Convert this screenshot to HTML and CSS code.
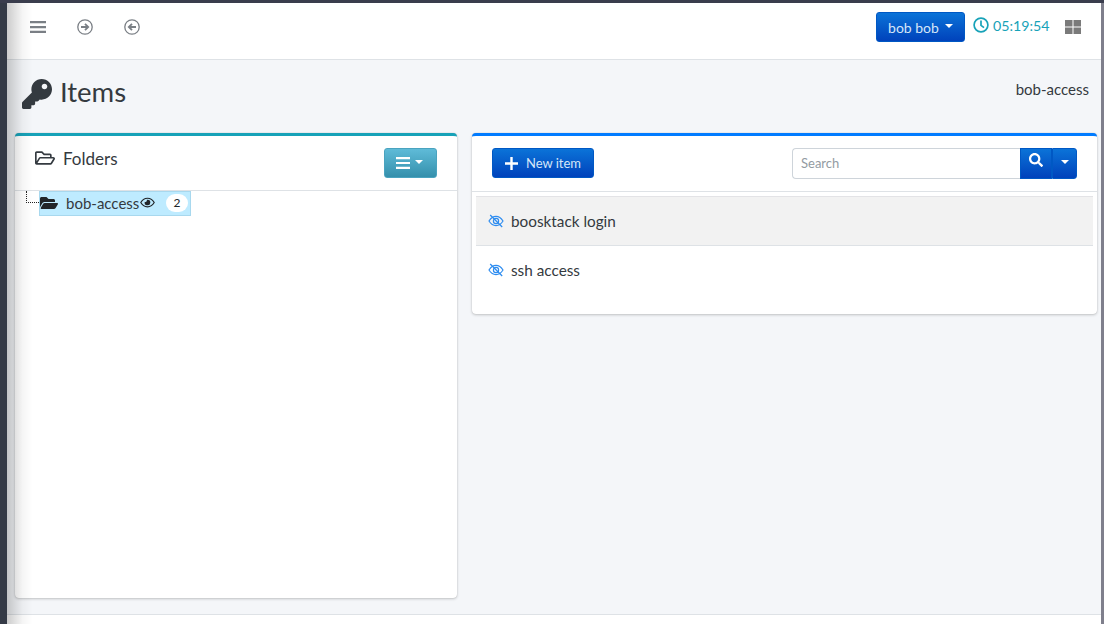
FILE: index.html
```html
<!DOCTYPE html>
<html lang="en">
<head>
    <meta charset="UTF-8">
    <title>Items</title>
    <link rel="stylesheet" href="styles.css">
</head>
<body>
    <div class="sidebar-strip"></div>
    <div class="sidebar-shadow"></div>
    <div class="wrapper">
        <!-- Barre du haut -->
        <nav class="topbar">
            <div class="topbar-left">
                <svg class="nav-icon" viewBox="0 0 16 16"><path d="M0 2h16v2.300H0zM0 6.900h16v2.300H0zM0 11.800h16v2.300H0z"/></svg>
                <svg class="nav-icon" viewBox="0 0 16 16"><circle class="ring" cx="8" cy="8" r="7.200"/><path class="arrow" d="M4 8h7M8 4.800 11.200 8 8 11.200"/></svg>
                <svg class="nav-icon" viewBox="0 0 16 16"><circle class="ring" cx="8" cy="8" r="7.200"/><path class="arrow" d="M12 8H5M8 4.800 4.800 8 8 11.200"/></svg>
            </div>
            <div class="topbar-right">
                <button class="btn btn-blue user-btn">bob bob <span class="caret"></span></button>
                <span class="clock">
                    <svg viewBox="0 0 16 16"><circle cx="8" cy="8" r="6.900"/><path d="M8 3.600V8.400L11 10.600"/></svg>
                    05:19:54
                </span>
                <svg class="apps" viewBox="0 0 16 14"><path d="M0 0h7.500v6.500H0zM8.500 0H16v6.500H8.500zM0 7.500h7.500V14H0zM8.500 7.500H16V14H8.500z"/></svg>
            </div>
        </nav>

        <main class="content">
            <header class="page-head">
                <h1>
                    <svg viewBox="0 0 512 512"><path d="M512 176.001C512 273.203 433.202 352 336 352c-11.220 0-22.190-1.062-32.827-3.069l-24.012 27.014A23.999 23.999 0 0 1 261.223 384H224v40c0 13.255-10.745 24-24 24h-40v40c0 13.255-10.745 24-24 24H24c-13.255 0-24-10.745-24-24v-78.059c0-6.365 2.529-12.470 7.029-16.971l161.802-161.802C163.108 213.814 160 195.271 160 176 160 78.798 238.797.001 335.999 0 433.488-.001 512 78.511 512 176.001zM336 128c0 26.510 21.490 48 48 48s48-21.490 48-48-21.490-48-48-48-48 21.490-48 48z"/></svg>
                    Items
                </h1>
                <span class="crumb">bob-access</span>
            </header>

            <div class="columns">
                <section class="card card-folders">
                    <div class="card-head folders-head">
                        <h2>
                            <svg viewBox="0 0 576 512"><path d="M527.900 224H480v-48c0-26.500-21.500-48-48-48H272l-64-64H48C21.500 64 0 85.500 0 112v288c0 26.500 21.500 48 48 48h400c16.500 0 31.900-8.500 40.700-22.600l79.900-128c20-31.900-3-73.400-40.700-73.400zM48 118c0-3.300 2.700-6 6-6h134.100l64 64H426c3.300 0 6 2.700 6 6v42H152c-16.800 0-32.400 8.800-41.100 23.200L48 351.400zm400 282H72l77.200-128H528z"/></svg>
                            Folders
                        </h2>
                        <button class="btn btn-teal menu-btn">
                            <svg viewBox="0 0 14 12"><path d="M0 0h14v2.200H0zM0 4.900h14v2.200H0zM0 9.800h14V12H0z"/></svg>
                            <span class="caret"></span>
                        </button>
                    </div>
                    <div class="tree">
                        <span class="tree-line"></span>
                        <div class="tree-node">
                            <svg class="node-folder" viewBox="0 0 576 512"><path d="M572.694 292.093L500.270 416.248A63.997 63.997 0 0 1 444.989 448H45.025c-18.523 0-30.064-20.093-20.731-36.093l72.424-124.155A64 64 0 0 1 152 256h399.964c18.523 0 30.064 20.093 20.730 36.093zM152 224h328v-48c0-26.510-21.490-48-48-48H272l-64-64H48C21.490 64 0 85.490 0 112v278.046l69.077-118.418C86.214 242.250 117.989 224 152 224z"/></svg>
                            <span class="node-label">bob-access</span>
                            <svg class="node-eye" viewBox="0 0 576 512"><path d="M288 144a110.940 110.940 0 0 0-31.240 5 55.400 55.400 0 0 1 7.240 27 56 56 0 0 1-56 56 55.400 55.400 0 0 1-27-7.240A111.710 111.710 0 1 0 288 144zm284.520 97.400C518.290 135.590 410.930 64 288 64S57.680 135.640 3.480 241.410a32.350 32.350 0 0 0 0 29.190C57.710 376.410 165.070 448 288 448s230.320-71.640 284.520-177.410a32.350 32.350 0 0 0 0-29.190zM288 400c-98.650 0-189.090-55-237.930-144C98.910 167 189.340 112 288 112s189.090 55 237.930 144C477.100 345 386.660 400 288 400z"/></svg>
                            <span class="badge">2</span>
                        </div>
                    </div>
                </section>

                <section class="card card-items">
                    <div class="card-head items-head">
                        <button class="btn btn-blue new-btn">
                            <svg viewBox="0 0 14 14"><path d="M5.700 0h2.600v5.700H14v2.600H8.300V14H5.700V8.300H0V5.700h5.700z"/></svg>
                            New item
                        </button>
                        <div class="search">
                            <input class="search-input" type="text" placeholder="Search">
                            <button class="btn btn-blue search-btn">
                                <svg viewBox="0 0 512 512"><path d="M505 442.700L405.300 343c-4.500-4.500-10.600-7-17-7H372c27.600-35.300 44-79.700 44-128C416 93.100 322.900 0 208 0S0 93.100 0 208s93.100 208 208 208c48.300 0 92.700-16.400 128-44v16.300c0 6.400 2.500 12.500 7 17l99.700 99.700c9.400 9.400 24.600 9.400 33.900 0l28.300-28.300c9.400-9.400 9.400-24.600.1-34zM208 336c-70.700 0-128-57.200-128-128 0-70.700 57.200-128 128-128 70.700 0 128 57.200 128 128 0 70.700-57.200 128-128 128z"/></svg>
                            </button>
                            <button class="btn btn-blue search-more"><span class="caret"></span></button>
                        </div>
                    </div>
                    <ul class="item-list">
                        <li class="item item-active">
                            <svg viewBox="0 0 16 14"><path d="M1 7C3 3.800 5.300 2.400 8 2.400S13 3.800 15 7c-2 3.200-4.300 4.600-7 4.600S3 10.200 1 7z"/><circle cx="8" cy="7" r="2.600"/><path d="M2.200 1 14.200 13"/></svg>
                            boosktack login
                        </li>
                        <li class="item">
                            <svg viewBox="0 0 16 14"><path d="M1 7C3 3.800 5.300 2.400 8 2.400S13 3.800 15 7c-2 3.200-4.300 4.600-7 4.600S3 10.200 1 7z"/><circle cx="8" cy="7" r="2.600"/><path d="M2.200 1 14.200 13"/></svg>
                            ssh access
                        </li>
                    </ul>
                </section>
            </div>
        </main>

        <footer class="footer"></footer>
    </div>
    <div class="scroll-strip"></div>
</body>
</html>
```

FILE: styles.css
```css
* {
    box-sizing: border-box;
}
html, body {
    height: 100%;
}
body {
    margin: 0;
    display: flex;
    overflow: hidden;
    font-family: "Lato", "Liberation Sans", sans-serif;
    font-size: 16px;
    color: #343a40;
    background: #f4f6f9;
    border-top: 3px solid #3a3d4d;
}
svg {
    display: block;
    fill: currentColor;
}

/* Bords de la fenetre */
.sidebar-strip {
    width: 7px;
    flex: none;
    background: #343a46;
}
.scroll-strip {
    width: 3px;
    flex: none;
    background: #7f7f8c;
}
.sidebar-shadow {
    position: absolute;
    top: 3px;
    bottom: 0;
    left: 7px;
    width: 26px;
    background: linear-gradient(to right, rgba(0, 0, 0, .2), rgba(0, 0, 0, .04) 60%, rgba(0, 0, 0, 0));
    pointer-events: none;
}
.wrapper {
    flex: 1;
    min-width: 0;
    display: flex;
    flex-direction: column;
}

/* Barre du haut */
.topbar {
    height: 57px;
    flex: none;
    display: flex;
    justify-content: space-between;
    align-items: center;
    padding: 0 20px 8px 23px;
    background: #fff;
    border-bottom: 1px solid #dee2e6;
}
.topbar-left {
    display: flex;
    align-items: center;
    gap: 31px;
}
.nav-icon {
    width: 16px;
    height: 16px;
    color: #7a7f85;
}
.ring {
    fill: none;
    stroke: #7a7f85;
    stroke-width: 1.300;
}
.arrow {
    fill: none;
    stroke: #7a7f85;
    stroke-width: 1.800;
}
.topbar-right {
    display: flex;
    align-items: center;
}
.btn {
    border: 1px solid transparent;
    border-radius: 3px;
    color: #fff;
    font: inherit;
    padding: 0;
    display: flex;
    align-items: center;
    justify-content: center;
}
.btn-blue {
    background: linear-gradient(to bottom, #0b73d8, #0042bb);
    border-color: #0058c4;
}
.btn-teal {
    background: linear-gradient(to bottom, #5fbbd8, #3590ac);
    border-color: #4aa3bf;
}
.caret {
    display: inline-block;
    border-top: 4.500px solid #fff;
    border-left: 4.500px solid transparent;
    border-right: 4.500px solid transparent;
    margin-top: -3px;
}
.user-btn {
    width: 89px;
    height: 30px;
    margin: 0 8px 0 0;
    font-size: 14px;
    gap: 6px;
    color: #d5e6f8;
}
.clock {
    display: flex;
    align-items: center;
    gap: 4px;
    width: 77px;
    font-size: 14.200px;
    color: #17a2b8;
    margin-top: -4px;
}
.clock svg {
    width: 16px;
    height: 16px;
    fill: none;
    stroke: #17a2b8;
    stroke-width: 1.700;
}
.apps {
    width: 16px;
    height: 14px;
    margin-left: 15px;
    color: #7a7a7a;
}

/* Contenu */
.content {
    flex: 1;
    min-height: 0;
    padding: 0 4px 0 8px;
}
.page-head {
    height: 73px;
    display: flex;
    justify-content: space-between;
    padding: 16px 8px 0 7px;
}
.page-head h1 {
    margin: 0;
    display: flex;
    align-items: center;
    gap: 8px;
    height: 32px;
    font-size: 27.500px;
    font-weight: 400;
    line-height: 1;
}
.page-head h1 svg {
    width: 30px;
    height: 30px;
    margin-top: 4px;
}
.crumb {
    font-size: 15px;
    line-height: 26px;
}
.columns {
    display: flex;
    align-items: flex-start;
    gap: 15px;
}
.card {
    background: #fff;
    border-top: 3px solid #17a2b8;
    border-radius: 4px;
    box-shadow: 0 0 1px rgba(0, 0, 0, .2), 0 1px 3px rgba(0, 0, 0, .2);
}
.card-folders {
    width: 442px;
    height: 465px;
}
.card-items {
    width: 625px;
    height: 181px;
    border-top-color: #007bff;
}
.card-head {
    display: flex;
    align-items: center;
    justify-content: space-between;
    border-bottom: 1px solid #dee2e6;
}
.folders-head {
    height: 55px;
    padding: 0 20px;
}
.folders-head h2 {
    margin: 0 0 10px;
    display: flex;
    align-items: center;
    gap: 8px;
    font-size: 17px;
    font-weight: 400;
}
.folders-head h2 svg {
    width: 20px;
    height: 18px;
}
.menu-btn {
    width: 53px;
    height: 30px;
    gap: 5px;
    padding-right: 2px;
}
.menu-btn svg {
    width: 14px;
    height: 12px;
}

/* Arbre */
.tree {
    position: relative;
    height: 100px;
    padding-left: 24px;
}
.tree-line {
    position: absolute;
    left: 11px;
    top: 0;
    width: 13px;
    height: 12px;
    border-left: 1px dotted #222;
    border-bottom: 1px dotted #222;
}
.tree-node {
    width: 152px;
    height: 25px;
    display: flex;
    align-items: center;
    padding-bottom: 2px;
    background: #beebff;
    border: 1px solid #a8d8ee;
    font-size: 15px;
}
.node-folder {
    width: 18px;
    height: 16px;
    color: #212529;
}
.node-label {
    margin-left: 8px;
    width: 74px;
}
.node-eye {
    width: 15px;
    height: 13px;
    color: #212529;
}
.badge {
    margin-left: 11px;
    width: 22px;
    height: 18px;
    border-radius: 9px;
    background: #fff;
    font-size: 12px;
    text-align: center;
    line-height: 18px;
    color: #212529;
}

/* Liste des items */
.items-head {
    height: 56px;
    padding: 0 20px;
}
.new-btn {
    width: 102px;
    height: 30px;
    margin-bottom: 1px;
    gap: 8px;
    font-size: 13px;
    color: #d5e6f8;
}
.new-btn svg {
    width: 13px;
    height: 13px;
    color: #fff;
}
.search {
    display: flex;
    height: 31px;
}
.search-input {
    width: 228px;
    height: 31px;
    padding: 0 8px 2px;
    border: 1px solid #ced4da;
    border-right: 0;
    border-radius: 4px 0 0 4px;
    font: inherit;
    font-size: 13px;
    outline: none;
}
.search-input::placeholder {
    color: #939ba2;
}
.search-btn {
    width: 32px;
    border-radius: 0;
    align-items: flex-start;
    padding-top: 4px;
}
.search-btn svg {
    width: 14px;
    height: 14px;
}
.search-more {
    width: 25px;
    border-radius: 0 3px 3px 0;
}
.item-list {
    list-style: none;
    margin: 0;
    padding: 4px 4px 0;
}
.item {
    height: 50px;
    display: flex;
    align-items: center;
    gap: 7px;
    padding: 0 0 3px 12px;
    font-size: 15.300px;
}
.item-active {
    background: #f2f2f2;
    border-top: 1px solid #e3e3e6;
    border-bottom: 1px solid #dee2e6;
    padding-bottom: 1px;
}
.item svg {
    width: 16px;
    height: 14px;
    fill: none;
    stroke: #2d8cf0;
    stroke-width: 1.200;
}
.footer {
    height: 10px;
    flex: none;
    background: #fff;
    border-top: 1px solid #dee2e6;
}
```
